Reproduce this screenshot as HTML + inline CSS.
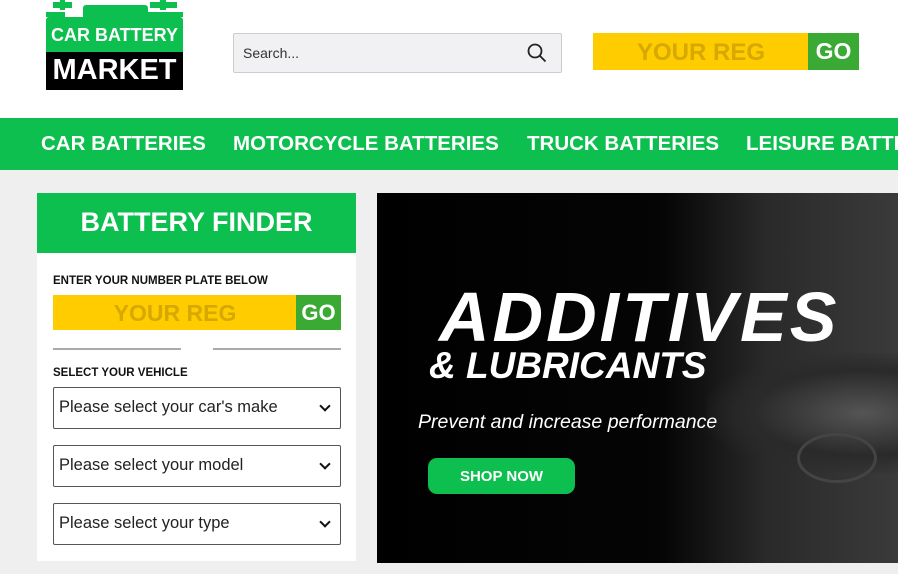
<!DOCTYPE html>
<html><head><meta charset="utf-8"><style>
*{margin:0;padding:0;box-sizing:border-box}
body{width:898px;height:574px;overflow:hidden;background:#efefef;font-family:"Liberation Sans",sans-serif;position:relative}
.abs{position:absolute}
.top{left:0;top:0;width:898px;height:118px;background:#fff}
.nav{left:0;top:118px;width:898px;height:52px;background:#0dbf4f;white-space:nowrap;overflow:hidden}
.nav span{position:absolute;top:14px;color:#fff;font-weight:bold;font-size:20.5px;letter-spacing:0px}
.sel{left:53px;width:288px;height:42px;border:1px solid #555;border-radius:2px;background:#fff;font-size:16.5px;color:#222;padding:10px 5px}
.sel:after{content:"";position:absolute;right:11px;top:14px;width:6px;height:6px;border-right:2px solid #111;border-bottom:2px solid #111;transform:rotate(45deg)}
</style></head><body>
<div class="abs top"></div>
<!-- logo -->
<div class="abs" style="left:53px;top:2px;width:19px;height:6px;background:#0dbf4f"></div>
<div class="abs" style="left:60px;top:0;width:5px;height:10px;background:#0dbf4f"></div>
<div class="abs" style="left:150px;top:2px;width:27px;height:6px;background:#0dbf4f"></div>
<div class="abs" style="left:160px;top:0;width:6px;height:10px;background:#0dbf4f"></div>
<div class="abs" style="left:46px;top:12px;width:19px;height:5px;background:#0dbf4f"></div>
<div class="abs" style="left:143px;top:12px;width:40px;height:5px;background:#0dbf4f"></div>
<div class="abs" style="left:83px;top:5px;width:65px;height:14px;background:#0dbf4f;border-radius:3px 3px 0 0"></div>
<div class="abs" style="left:46px;top:17px;width:137px;height:36px;background:#0dbf4f;color:#fff;font-weight:bold;font-size:18px;text-align:center;padding-top:8px;border-radius:3px 3px 0 0;white-space:nowrap">CAR BATTERY</div>
<div class="abs" style="left:46px;top:52px;width:137px;height:38px;background:#000;color:#fff;font-weight:bold;font-size:29px;text-align:center;padding-top:2px">MARKET</div>
<!-- search -->
<div class="abs" style="left:233px;top:33px;width:329px;height:40px;background:#f1f1f4;border:1px solid #ccc;border-radius:2px;font-size:14px;color:#333;padding:11px 9px">Search...</div>
<svg class="abs" style="left:527px;top:43px" width="20" height="20" viewBox="0 0 20 20"><circle cx="8" cy="8" r="6.5" fill="none" stroke="#222" stroke-width="1.8"/><line x1="12.8" y1="12.8" x2="18.5" y2="18.5" stroke="#222" stroke-width="1.8"/></svg>
<div class="abs" style="left:593px;top:33px;width:216px;height:37px;background:#ffcc00;color:#d6a800;font-weight:bold;font-size:24px;text-align:center;padding-top:6px">YOUR REG</div>
<div class="abs" style="left:808px;top:33px;width:51px;height:37px;background:#3aaa35;color:#fff;font-weight:bold;font-size:23px;text-align:center;padding-top:5px">GO</div>
<!-- nav -->
<div class="abs nav"><span style="left:41px">CAR BATTERIES</span><span style="left:233px">MOTORCYCLE BATTERIES</span><span style="left:527px">TRUCK BATTERIES</span><span style="left:746px">LEISURE BATTERIES</span></div>
<!-- sidebar -->
<div class="abs" style="left:37px;top:193px;width:319px;height:368px;background:#fff"></div>
<div class="abs" style="left:37px;top:193px;width:319px;height:60px;background:#0dbf4f;color:#fff;font-weight:bold;font-size:27px;text-align:center;padding-top:14px">BATTERY FINDER</div>
<div class="abs" style="left:53px;top:275px;font-size:11.5px;font-weight:bold;color:#111">ENTER YOUR NUMBER PLATE BELOW</div>
<div class="abs" style="left:53px;top:295px;width:244px;height:35px;background:#ffcc00;color:#d6a800;font-weight:bold;font-size:23px;text-align:center;padding-top:5px">YOUR REG</div>
<div class="abs" style="left:296px;top:295px;width:45px;height:35px;background:#3aaa35;color:#fff;font-weight:bold;font-size:22px;text-align:center;padding-top:5px">GO</div>
<div class="abs" style="left:53px;top:348px;width:128px;height:2px;background:#aaa"></div>
<div class="abs" style="left:213px;top:348px;width:128px;height:2px;background:#aaa"></div>
<div class="abs" style="left:53px;top:367px;font-size:11.5px;font-weight:bold;color:#111">SELECT YOUR VEHICLE</div>
<div class="abs sel" style="top:387px">Please select your car's make</div>
<div class="abs sel" style="top:445px">Please select your model</div>
<div class="abs sel" style="top:503px">Please select your type</div>
<!-- banner -->
<div class="abs" style="left:377px;top:193px;width:521px;height:370px;background:linear-gradient(90deg,#000 0%,#050505 55%,#2a2a2a 75%,#3a3a3a 100%);overflow:hidden">
<div class="abs" style="left:330px;top:160px;width:260px;height:120px;background:radial-gradient(ellipse at 60% 50%,#555 0%,#2a2a2a 50%,transparent 75%)"></div>
<div class="abs" style="left:420px;top:240px;width:80px;height:50px;border:3px solid #444;border-radius:50%"></div>
<div class="abs" style="left:62px;top:84px;color:#fff;font-weight:bold;font-style:italic;font-size:70px;letter-spacing:3px;white-space:nowrap">ADDITIVES</div>
<div class="abs" style="left:52px;top:152px;color:#fff;font-weight:bold;font-style:italic;font-size:37px;white-space:nowrap">&amp; LUBRICANTS</div>
<div class="abs" style="left:41px;top:218px;color:#fff;font-style:italic;font-size:19.5px;white-space:nowrap">Prevent and increase performance</div>
<div class="abs" style="left:51px;top:265px;width:147px;height:36px;background:#0dbf4f;border-radius:9px;color:#fff;font-weight:bold;font-size:15px;text-align:center;padding-top:10px">SHOP NOW</div>
</div>
</body></html>
